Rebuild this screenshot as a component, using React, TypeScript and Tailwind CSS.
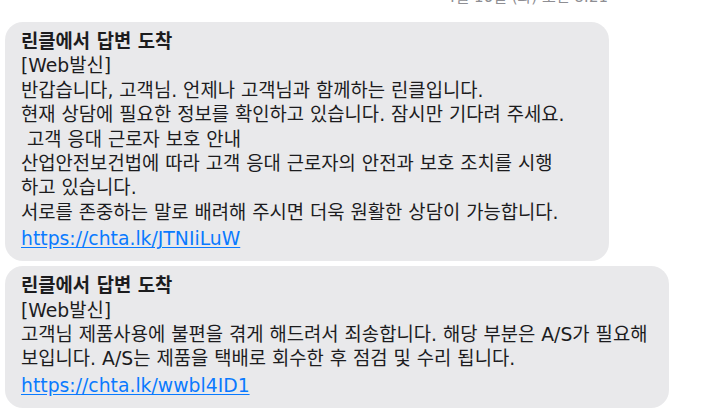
const FONT = "font-['DejaVu_Sans','Noto_Sans_CJK_KR',sans-serif]";

type Msg = {
  width: string;
  lines: string[];
  link: string;
};

const messages: Msg[] = [
  {
    width: "w-[604px]",
    lines: [
      "[Web발신]",
      "반갑습니다, 고객님. 언제나 고객님과 함께하는 린클입니다.",
      "현재 상담에 필요한 정보를 확인하고 있습니다. 잠시만 기다려 주세요.",
      " 고객 응대 근로자 보호 안내",
      "산업안전보건법에 따라 고객 응대 근로자의 안전과 보호 조치를 시행",
      "하고 있습니다.",
      "서로를 존중하는 말로 배려해 주시면 더욱 원활한 상담이 가능합니다.",
    ],
    link: "https://chta.lk/JTNIiLuW",
  },
  {
    width: "w-[664px]",
    lines: [
      "[Web발신]",
      "고객님 제품사용에 불편을 겪게 해드려서 죄송합니다. 해당 부분은 A/S가 필요해",
      "보입니다. A/S는 제품을 택배로 회수한 후 점검 및 수리 됩니다.",
    ],
    link: "https://chta.lk/wwbl4ID1",
  },
];

function Bubble({ msg }: { msg: Msg }) {
  return (
    <div className={`${msg.width} rounded-[18px] bg-[#e9e9eb] pl-4 pr-3 pt-2 pb-[8px]`}>
      <div className="text-[18.8px] leading-[24.4px] font-bold text-[#1c1c1e]">린클에서 답변 도착</div>
      {msg.lines.map((l, i) => (
        <div key={i} className="text-[18.8px] leading-[24.4px] text-[#1c1c1e] whitespace-pre">
          {l}
        </div>
      ))}
      <div className="text-[18.8px] leading-[28px]">
        <a href="#" className="text-[#0a7aff] underline underline-offset-2">
          {msg.link}
        </a>
      </div>
    </div>
  );
}

export default function App() {
  return (
    <div className={`w-[720px] h-[412px] overflow-hidden bg-white ${FONT}`}>
      {/* timestamp, mostly cut off at the top */}
      <div className="h-[22px] flex justify-end pr-[112px]">
        <span className="-mt-[12px] text-[15px] leading-[18px] text-[#8e8e93]">4월 16일 (화) 오전 8:21</span>
      </div>

      <div className="flex flex-col gap-[5px] pl-[5px]">
        {messages.map((m, i) => (
          <Bubble key={i} msg={m} />
        ))}
      </div>
    </div>
  );
}
